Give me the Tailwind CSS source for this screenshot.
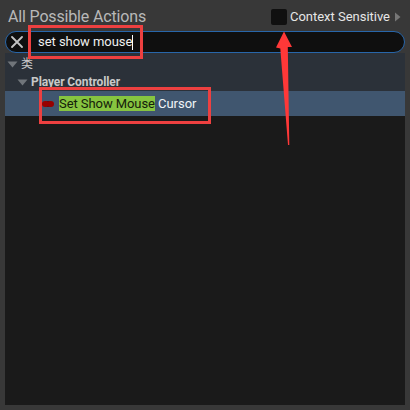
<!DOCTYPE html>
<html lang="en">
<head>
<meta charset="utf-8">
<title>All Possible Actions</title>
<script src="https://cdn.jsdelivr.net/npm/@tailwindcss/browser@4"></script>
</head>
<body class="bg-[#383838] overflow-hidden">
<main class="relative w-[410px] h-[410px] px-[5px] pb-[5px] flex flex-col bg-[#383838] font-['Roboto','Noto_Sans_CJK_SC',sans-serif] text-[13px] text-[#c8c8c8] whitespace-nowrap">
  <header class="h-[31px] shrink-0 flex items-center justify-between pl-[3px] pr-1 pt-[2px]">
    <h1 class="text-[16px] tracking-[-0.16px] leading-5 text-[#b8b8b8]">All Possible Actions</h1>
    <div class="flex items-center">
      <span class="size-4 rounded-[2px] bg-[#101010] mr-[3px]"></span>
      <span class="text-[13px] tracking-[-0.02px] text-[#e6e6e6]">Context Sensitive</span>
      <svg class="ml-[5px] w-[6px] h-[10px]" viewBox="0 0 6 10"><path d="M0 0.5L5.5 5L0 9.5Z" fill="#777"/></svg>
    </div>
  </header>
  <div class="h-[22px] shrink-0 rounded-full border border-[#2866aa] bg-[#0f0f0f] flex items-center pl-[5px]">
    <svg class="size-[12px]" viewBox="0 0 12 12"><path d="M1 1L11 11M11 1L1 11" stroke="#c4c4c4" stroke-width="1.8" stroke-linecap="round"/></svg>
    <span class="ml-[15px] text-[13px] tracking-[-0.04px] text-[#f0f0f0]">set show mouse</span>
    <span class="w-px h-[15px] bg-white"></span>
  </div>
  <section class="grow flex flex-col bg-[#1a1a1a]">
    <div class="h-[20px] shrink-0 flex items-center bg-[#2b3139] pl-[2px] pt-[2px]">
      <svg class="w-[11px] h-[7px]" viewBox="0 0 11 7"><path d="M0.5 0.5H10.5L5.5 6.5Z" fill="#70757a"/></svg>
      <span class="ml-[3px] text-[12px] leading-none">类</span>
    </div>
    <div class="h-[18px] shrink-0 flex items-center bg-[#2b3139] pl-[12px]">
      <svg class="w-[11px] h-[7px]" viewBox="0 0 11 7"><path d="M0.5 0.5H10.5L5.5 6.5Z" fill="#70757a"/></svg>
      <span class="ml-[3px] text-[12px] tracking-[-0.1px] font-bold">Player Controller</span>
    </div>
    <div class="h-[25px] shrink-0 flex items-center bg-[#40566f] pl-[37px] text-[#f0f4f8]">
      <svg class="w-[12px] h-[6px]" viewBox="0 0 12 6"><rect width="12" height="6" rx="3" fill="#960000"/><path d="M5 0.5H7M5 5.5H7" stroke="#680b12"/></svg>
      <span class="ml-[5px] h-[15px] leading-[15px] tracking-[-0.07px] bg-[#86c440] text-[#15200a]">Set Show Mouse</span><span class="ml-[3px]">Cursor</span>
    </div>
  </section>
  <div class="absolute left-[28px] top-[25px] w-[115px] h-[34px] border-3 border-[#ed4040]"></div>
  <div class="absolute left-[39px] top-[87px] w-[172px] h-[37px] border-3 border-[#ed4040]"></div>
  <svg class="absolute left-0 top-0 w-[410px] h-[410px]" viewBox="0 0 410 410"><path d="M284 31.5L292 47H287.8L289.3 145H288L280.3 48.5L276 47.5Z" fill="#ff3838"/></svg>
</main>
</body>
</html>
